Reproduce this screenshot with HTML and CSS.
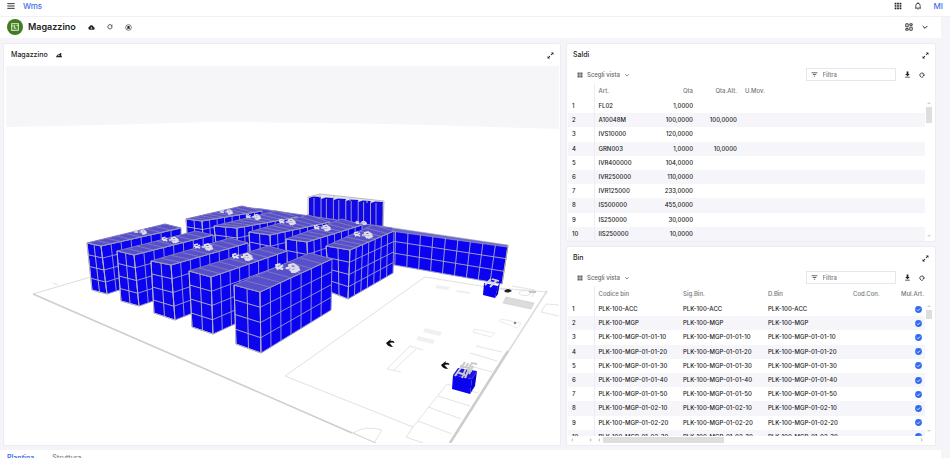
FILE: index.html
```html
<!DOCTYPE html>
<html lang="it">
<head>
<meta charset="utf-8">
<title>Wms - Magazzino</title>
<link rel="stylesheet" href="styles.css">
</head>
<body>
<svg class="defs" aria-hidden="true">
  <symbol id="expand" viewBox="0 0 12 12"><path d="M7 1h4v4L9.600 3.600 7.500 5.700 6.300 4.500 8.400 2.400zM5 11H1V7l1.400 1.400 2.100-2.100 1.200 1.200-2.100 2.100z"/></symbol>
  <symbol id="views" viewBox="0 0 12 12"><path d="M1 1h4.500v4.500H1zM6.500 1H11v4.500H6.500zM1 6.500h4.500V11H1zM6.500 6.500H11V11H6.500z"/></symbol>
  <symbol id="chevron" viewBox="0 0 12 12"><path d="M2.500 4.500 6 8l3.500-3.500" fill="none" stroke="currentColor" stroke-width="1.500"/></symbol>
  <symbol id="filter" viewBox="0 0 12 12"><path d="M1 3h10M3 6h6M5 9h2" fill="none" stroke="currentColor" stroke-width="1.500"/></symbol>
  <symbol id="download" viewBox="0 0 12 12"><path d="M4.500 1h3v4H10L6 9 2 5h2.500zM2 10h8v1.300H2z"/></symbol>
  <symbol id="reload" viewBox="0 0 12 12"><path d="M9.500 3A4.300 4.300 0 1 0 10.300 6" fill="none" stroke="currentColor" stroke-width="1.500"/><path d="M10.800 1v4H7z"/></symbol>
  <symbol id="reload-small" viewBox="0 0 12 12"><path d="M8.500 9.500A4.200 4.200 0 1 1 10 5.500" fill="none" stroke="currentColor" stroke-width="1.600"/><path d="M7 5.500h5L9.600 8.500z"/></symbol>
  <symbol id="check" viewBox="0 0 12 12"><circle cx="6" cy="6" r="5.800"/><path d="m3.300 6.200 1.900 1.900 3.600-3.800" fill="none" stroke="#fff" stroke-width="1.400"/></symbol>
</svg>

<header class="topbar">
  <button class="icon-btn" aria-label="Menu"><svg class="ic8" viewBox="0 0 12 12"><path d="M.5 2.500h11M.5 6h11M.5 9.500h11" stroke="currentColor" stroke-width="1.400"/></svg></button>
  <a class="brand" href="#">Wms</a>
  <span class="spacer"></span>
  <button class="icon-btn" aria-label="App"><svg class="ic8" viewBox="0 0 12 12"><path d="M1 1h2.600v2.600H1zM4.700 1h2.600v2.600H4.700zM8.400 1H11v2.600H8.400zM1 4.700h2.600v2.600H1zM4.700 4.700h2.600v2.600H4.700zM8.400 4.700H11v2.600H8.400zM1 8.400h2.600V11H1zM4.700 8.400h2.600V11H4.700zM8.400 8.400H11V11H8.400z"/></svg></button>
  <button class="icon-btn" aria-label="Notifiche"><svg class="ic8" viewBox="0 0 12 12"><path d="M1.500 9.200h9M2.800 9V5.200a3.200 3.200 0 0 1 6.400 0V9M6 .3v1.500" fill="none" stroke="currentColor" stroke-width="1.200"/><path d="M4.800 10.200h2.400a1.200 1.200 0 0 1-2.400 0"/></svg></button>
  <a class="user" href="#">MI</a>
</header>

<div class="page">
  <div class="titlebar">
    <svg class="badge" viewBox="0 0 16 16"><circle cx="8" cy="8" r="8" fill="#3f7d20"/><rect x="4.700" y="4.700" width="6.600" height="6.600" fill="none" stroke="#e6f0dc"/><path d="M4.700 7h2.500M9.500 6.500h2M6.500 9.200h3M7.700 6v3" stroke="#e6f0dc" stroke-width=".9"/></svg>
    <h1>Magazzino</h1>
    <button class="icon-btn" aria-label="Carica"><svg class="ic7" viewBox="0 0 12 12"><path d="M3 10a3 3 0 0 1-.4-5.800A3.700 3.700 0 0 1 9.600 5 2.600 2.600 0 0 1 9.500 10z"/><path d="M6 9V6M4.600 7.200 6 5.800l1.400 1.400" fill="none" stroke="#fff"/></svg></button>
    <button class="icon-btn" aria-label="Ricarica"><svg class="ic6" viewBox="0 0 12 12"><use href="#reload"/></svg></button>
    <button class="icon-btn" aria-label="Impostazioni"><svg class="ic7" viewBox="0 0 12 12"><circle cx="6" cy="6" r="4.900" fill="none" stroke="currentColor"/><path d="M4 3.500h4L7.500 5.500 9 8H3l1.500-2.500z"/></svg></button>
    <span class="spacer"></span>
    <button class="icon-btn" aria-label="Disposizione"><svg class="ic8" viewBox="0 0 12 12"><path d="M1.200 1.200h3.600v4.600H1.200zM7.200 1.200h3.600v2.400H7.200zM1.200 8.400h3.600v2.400H1.200zM7.200 6.200h3.600v4.600H7.200z" fill="none" stroke="currentColor" stroke-width="1.300"/></svg></button>
    <button class="icon-btn" aria-label="Espandi"><svg class="ic8" viewBox="0 0 12 12"><use href="#chevron"/></svg></button>
  </div>

  <main class="board">
    <section class="card map">
      <div class="card-head">
        <h2>Magazzino</h2>
        <button class="icon-btn" aria-label="Vista"><svg class="ic6" viewBox="0 0 12 12"><path d="M0 10.500h12V9L10.500 8V2L8.500 2 7 4 3 5.500 1 8zM3 8l4-2.500v2.500z" fill-rule="evenodd"/></svg></button>
        <span class="spacer"></span>
        <button class="icon-btn" aria-label="Ingrandisci"><svg class="ic7"><use href="#expand"/></svg></button>
      </div>
      <svg class="scene" id="scene" viewBox="6 66 553 377" role="img" aria-label="Planimetria 3D">
        <path d="M6 66H559V129Q490 127 430 125Q300 122 210 122Q110 125 6 127Z" fill="#f6f6f9"/>
        <g fill="none" stroke="#dcdcdc">
          <path d="M94 276 33 294" />
          <path d="M33 294 352 433" stroke="#cfcfcf" stroke-width="1.500"/>
          <path d="M53 283 58 285" stroke-width=".8"/>
          <path d="M285 376 425 277 506 290M285 376 413 427 406 437 423 443" stroke-width=".9"/>
          <path d="M353 433 376 443M353 433Q366 425 382 430L374 443" stroke-width=".8"/>
          <path d="M497 288 548 292" stroke-width=".9"/>
          <path d="M33 294 378 444" stroke="#cfcfcf" stroke-width=".8"/>
          <path d="M547 291 508 352" stroke-width="1.500"/>
          <path d="M508 351 450 443" stroke="#cdcdcd" stroke-width="2.600"/>
          <path d="M470 353 497 361M463 364 492 372M476 346 502 352M447 384 478 393M438 396 470 406M428 407 461 419M418 421 452 434M447 384 413 427" stroke-width=".8"/>
          <path d="M387 369 410 346 423 350M387 369 401 372M394 370 416 349" stroke-width=".8" stroke="#dedede"/>
          <path d="M474 329 495 333 491 337 473 332ZM501 319 521 323 517 328 499 321Z" stroke-width=".7" stroke="#e2e2e2"/>
          <path d="M559 305 546 304 541 312 559 316M512 286 535 290 532 297" stroke-width=".8"/>
          <ellipse cx="525" cy="293" rx="6" ry="2.500" stroke-width=".8"/>
          <path d="M536 292 529 292" stroke="#999"/>
        </g>
        <path d="M506 297 534 303 531 309 503 303Z" fill="#dcdcdc" stroke="#c2c2c2" stroke-width=".5"/>
        <g fill="#f0f0f0"><path d="M425 328l17 4-2 4-17-4zM418 336l17 4-2 4-17-4zM437 285l13 2-2 3-13-2zM457 290l14 2-2 2-13-2z"/></g>
        <path d="M504 291Q508 287 512 291Q507 294 504 291Z" fill="#222"/><circle cx="515" cy="323" r="1.300" fill="#888"/>
        <g fill="#111"><path id="arrow" d="M386 343 391 339 390.500 341Q394 340 394.500 343Q392 342 389.500 343L393 347Q388 347 386 343Z"/><use href="#arrow" x="55" y="22"/></g>
      </svg>
    </section>

    <div class="side">
      <section class="card">
        <div class="card-head">
          <h2>Saldi</h2><span class="spacer"></span>
          <button class="icon-btn" aria-label="Ingrandisci Saldi"><svg class="ic7"><use href="#expand"/></svg></button>
        </div>
        <div class="tools">
          <button class="view-btn"><svg class="ic6"><use href="#views"/></svg>Scegli vista<svg class="ic6"><use href="#chevron"/></svg></button>
          <span class="spacer"></span>
          <label class="filter"><svg class="ic7"><use href="#filter"/></svg><input type="text" placeholder="Filtra" aria-label="Filtra saldi"></label>
          <button class="icon-btn" aria-label="Scarica"><svg class="ic7"><use href="#download"/></svg></button>
          <button class="icon-btn" aria-label="Aggiorna"><svg class="ic6"><use href="#reload-small"/></svg></button>
        </div>
        <div class="grid">
          <div class="viewport">
            <table class="saldi">
              <colgroup><col class="c-idx"><col class="c-art"><col class="c-qta"><col class="c-alt"><col></colgroup>
              <thead><tr><th></th><th>Art.</th><th class="num">Qta</th><th class="num">Qta.Alt.</th><th>U.Mov.</th></tr></thead>
              <tbody>
                <tr><td>1</td><td>FL02</td><td class="num">1,0000</td><td></td><td></td></tr>
                <tr><td>2</td><td>A10048M</td><td class="num">100,0000</td><td class="num">100,0000</td><td></td></tr>
                <tr><td>3</td><td>IVS10000</td><td class="num">120,0000</td><td></td><td></td></tr>
                <tr><td>4</td><td>GRN003</td><td class="num">1,0000</td><td class="num">10,0000</td><td></td></tr>
                <tr><td>5</td><td>IVR400000</td><td class="num">104,0000</td><td></td><td></td></tr>
                <tr><td>6</td><td>IVR250000</td><td class="num">110,0000</td><td></td><td></td></tr>
                <tr><td>7</td><td>IVR125000</td><td class="num">233,0000</td><td></td><td></td></tr>
                <tr><td>8</td><td>IS500000</td><td class="num">455,0000</td><td></td><td></td></tr>
                <tr><td>9</td><td>IS250000</td><td class="num">30,0000</td><td></td><td></td></tr>
                <tr><td>10</td><td>IIS250000</td><td class="num">10,0000</td><td></td><td></td></tr>
              </tbody>
            </table>
          </div>
          <div class="vbar"><i class="up"></i><i class="thumb tall"></i><i class="down"></i></div>
        </div>
      </section>

      <section class="card">
        <div class="card-head">
          <h2>Bin</h2><span class="spacer"></span>
          <button class="icon-btn" aria-label="Ingrandisci Bin"><svg class="ic7"><use href="#expand"/></svg></button>
        </div>
        <div class="tools">
          <button class="view-btn"><svg class="ic6"><use href="#views"/></svg>Scegli vista<svg class="ic6"><use href="#chevron"/></svg></button>
          <span class="spacer"></span>
          <label class="filter"><svg class="ic7"><use href="#filter"/></svg><input type="text" placeholder="Filtra" aria-label="Filtra bin"></label>
          <button class="icon-btn" aria-label="Scarica"><svg class="ic7"><use href="#download"/></svg></button>
          <button class="icon-btn" aria-label="Aggiorna"><svg class="ic6"><use href="#reload-small"/></svg></button>
        </div>
        <div class="grid">
          <div class="viewport clipped">
            <table class="bin">
              <colgroup><col class="c-idx"><col class="c-bin"><col class="c-bin"><col class="c-bin"><col><col class="c-mul"></colgroup>
              <thead><tr><th></th><th>Codice bin</th><th>Sig.Bin.</th><th>D.Bin</th><th>Cod.Con.</th><th class="mul">Mul.Art.</th></tr></thead>
              <tbody id="bins"></tbody>
            </table>
          </div>
          <div class="vbar"><i class="up"></i><i class="thumb"></i><i class="down"></i></div>
        </div>
        <div class="hbar"><span class="pin"><i class="left"></i><i class="right"></i></span><i class="left"></i><i class="hthumb"></i><span class="spacer"></span><i class="right"></i></div>
      </section>
    </div>
  </main>

  <nav class="tabs"><a class="active" href="#">Plantina</a><a href="#">Struttura</a></nav>
</div>
<script src="app.js"></script>
</body>
</html>
```
FILE: styles.css
```css
* { box-sizing: border-box; }
body {
  margin: 0;
  height: 100vh;
  overflow: hidden;
  background: #f4f4f9;
  color: #222;
  font: 500 6px/8px Inter, "Liberation Sans", sans-serif;
}
button, input { font: inherit; color: inherit; }
button { border: 0; padding: 0; background: none; }
a { text-decoration: none; color: #3d6fe8; }
h1, h2 { margin: 0; }
svg { display: block; fill: currentColor; flex: none; }
.defs { position: absolute; width: 0; height: 0; }
.ic6 { width: 6px; height: 6px; }
.ic7 { width: 7px; height: 7px; }
.ic8 { width: 8px; height: 8px; }
.spacer { flex: 1; }

.topbar {
  display: flex;
  align-items: center;
  gap: 8px;
  height: 17px;
  padding: 0 7px 4px;
  background: #fff;
  border-bottom: 1px solid #f1f1f5;
}
.topbar .icon-btn + .icon-btn { margin-left: 4px; }
.brand { font-size: 8px; }
.user { font-size: 8px; margin-left: 4px; }

.page { margin-right: 9px; }
.titlebar {
  display: flex;
  align-items: center;
  gap: 12px;
  height: 21px;
  padding: 0 12px 1px 7px;
  background: #fff;
}
.badge { width: 16px; height: 16px; }
h1 { margin-left: -7px; font-size: 9px; line-height: 12px; font-weight: 600; }
.titlebar .icon-btn:last-child { margin-left: -4px; }

.board {
  display: grid;
  grid-template-columns: 558fr 370fr;
  gap: 5px;
  padding: 5px 5px 4px 3px;
}
.side { display: flex; flex-direction: column; gap: 4px; min-width: 0; }
.card { background: #fff; border: 1px solid #ececf2; border-radius: 2px; }
.card-head { display: flex; align-items: center; gap: 8px; height: 22px; padding: 0 6px; }
h2 { font-size: 7px; line-height: 8px; font-weight: 500; }
.map { padding: 0 1px 1px 2px; }
.map .card-head { padding: 0 5px; }
.scene { width: 100%; height: auto; }

.tools { display: flex; align-items: center; gap: 8px; height: 17px; padding: 0 10px; }
.view-btn { display: flex; align-items: center; gap: 4px; color: #666; }
.filter {
  display: flex;
  align-items: center;
  gap: 5px;
  width: 26%;
  height: 13px;
  padding: 0 4px;
  border: 1px solid #e6e6ec;
  color: #555;
}
.filter input { flex: 1; min-width: 0; border: 0; padding: 0; outline: 0; background: none; }
.filter input::placeholder { color: #777; opacity: 1; }

.grid { display: flex; padding: 0 2px 0 1px; }
.viewport { flex: 1; min-width: 0; overflow: hidden; }
.clipped { height: 150px; }
table { width: 100%; height: 158px; table-layout: fixed; border-collapse: collapse; }
th, td { padding: 0 0 0 4px; text-align: left; white-space: nowrap; font-weight: 500; }
th { height: 16px; color: #777; }
td:first-child, th:first-child { border-right: 1px solid #ececf2; }
tbody tr:nth-child(even) { background: #f6f6fa; }
.num { text-align: right; padding: 0; }
.c-idx { width: 26px; }
.c-art { width: 44px; }
.c-qta { width: 55px; }
.c-alt { width: 44px; }
.saldi th:last-child { padding-left: 8px; }
.c-bin { width: 85px; }
.c-mul { width: 24px; }
th.mul { padding: 0; }
td.mul svg { width: 7px; height: 7px; margin-left: 10px; color: #2f6bf0; }

.vbar { display: flex; flex-direction: column; align-items: center; gap: 3px; width: 8px; padding: 19px 0 4px; }
.thumb { width: 6px; height: 9px; background: #dedede; }
.tall { height: 16px; }
.up, .down, .left, .right { border: 2px solid transparent; width: 0; height: 0; }
.up { border-top: 0; border-bottom-color: #d4d4d4; }
.down { border-bottom: 0; border-top-color: #d4d4d4; margin-top: auto; }
.left { border-left: 0; border-right-color: #ccc; }
.right { border-right: 0; border-left-color: #ccc; }
.hbar { display: flex; align-items: center; gap: 3px; height: 9px; padding: 0 12px 2px 1px; }
.pin { display: flex; justify-content: space-between; width: 27px; padding: 0 3px; }
.hthumb { width: 34%; height: 6px; background: #dedede; }

.tabs { display: flex; gap: 18px; height: 18px; padding: 4px 7px; background: #fff; }
.tabs a { font-size: 7px; color: #888; }
.tabs .active { color: #3d6fe8; font-weight: 600; }
```
FILE: app.js
```js
const codes = ['ACC', 'MGP', 'MGP-01-01-10', 'MGP-01-01-20', 'MGP-01-01-30', 'MGP-01-01-40',
  'MGP-01-01-50', 'MGP-01-02-10', 'MGP-01-02-20', 'MGP-01-02-30'];
document.getElementById('bins').innerHTML = codes.map((c, i) => {
  const cell = `<td>PLK-100-${c}</td>`;
  return `<tr><td>${i + 1}</td>${cell.repeat(3)}<td></td><td class="mul"><svg><use href="#check"/></svg></td></tr>`;
}).join('');

const scene = document.getElementById('scene');
const mix = (p, q, t) => [p[0] + (q[0] - p[0]) * t, p[1] + (q[1] - p[1]) * t];

// A quad a-b-c-d split into cols (along a-b) by rows (along a-d).
function face(a, b, c, d, cols, rows, fill, line) {
  let grid = '';
  for (let i = 0; i <= cols; i++) grid += `M${mix(a, b, i / cols)}L${mix(d, c, i / cols)}`;
  for (let j = 0; j <= rows; j++) grid += `M${mix(a, d, j / rows)}L${mix(b, c, j / rows)}`;
  return `<path d="M${a}L${b}L${c}L${d}Z" fill="${fill}"/><path d="${grid}" fill="none" stroke="${line}" stroke-width="1"/>`;
}

function rack(a, b, c, d, a2, b2, c2, cols) {
  return face(a, b, b2, a2, 2, 4, '#0c05ee', '#a9a9c4') +
    face(b, c, c2, b2, cols, 4, '#0a02f0', '#8f8fcc') +
    face(a, b, c, d, 1, cols, '#574fcb', '#7d78bc') +
    `<path d="M${a}L${b}L${c}" fill="none" stroke="#9c9cba"/><path d="M${a}L${a2}L${b2}L${b}" fill="none" stroke="#b4b4bc"/>`;
}

function label(x, y, s) {
  return `<path transform="translate(${x} ${y}) scale(${s})" fill="none" stroke="#dedee8" stroke-width="1.700"
    d="M-9-2 -5-3M-8 1-3-2M-9-1-3 1M-1 0 2 0M1-2 5-3 8-1 4 0 1-2M2 1 6 3 10 1M3 3 9 0"/>`;
}

let out = '';
// Tall rack at the back
out += '<path d="M308 197 320 194 384 201 383 229 308 222Z" fill="#e4e4ea"/>';
for (let i = 0; i < 6; i++) {
  const x = 309 + i * 12.4, y = 198 + i;
  out += `<path d="M${x} ${y}l4-1.500 8 .5v27l-12-1z" fill="#1208e6"/><path d="M${x + 5} ${y}v27M${x + 12} ${y}v27" stroke="#a8a8cc" stroke-width=".9"/>`;
}
out += '<path d="M308 197 320 194 384 201 383 227M308 197V220M320 194V198M334 195V199M350 197V201M367 199V203" fill="none" stroke="#bdbdb8"/>';
// Long wall rack
out += face([383, 228], [508, 246], [502, 284], [383, 263], 10, 3, '#0a02f0', '#9c9cc8');
out += '<path d="M374 226 380 226 508 245 507 247 383 230Z" fill="#6e68c8" stroke="#aaaabc" stroke-width=".6"/><path d="M508 245 502 284" stroke="#a8a89c"/>';
// Walkway joining the rear ends of the racks
out += '<path d="M240 207 262 209 330 219 392 228 392 236 240 214Z" fill="#4a41d4"/><path d="M240 207 262 209 330 219 392 228" fill="none" stroke="#8a86b8"/>';

out += rack([186, 219], [202, 221], [262, 211], [242, 206], [188, 250], [204, 255], [262, 240], 8);
out += rack([214, 226], [237, 228], [298, 217], [276, 211], [218, 262], [238, 268], [298, 250], 8);
out += rack([249, 232], [270, 235], [330, 222], [308, 215], [251, 272], [272, 280], [330, 260], 8);
out += rack([286, 239], [307, 242], [362, 225], [342, 219], [288, 285], [309, 292], [362, 268], 8);
out += rack([326, 246], [350, 250], [394, 231], [373, 225], [330, 292], [348, 299], [393, 273], 7);
out += rack([87, 243], [101, 246], [181, 228], [165, 224], [92, 290], [107, 294], [181, 270], 8);
out += rack([117, 251], [134, 255], [213, 235], [196, 231], [121, 301], [139, 306], [213, 280], 8);
out += rack([151, 261], [171, 265], [248, 243], [230, 238], [154, 313], [175, 320], [248, 291], 8);
out += rack([189, 271], [211, 277], [287, 251], [268, 246], [192, 327], [213, 334], [287, 300], 8);
out += rack([234, 285], [260, 292], [332, 259], [310, 253], [236, 344], [261, 353], [331, 310], 7);

[[140, 232, .7], [170, 240, .9], [203, 247, 1], [242, 257, 1.100], [287, 268, 1.300], [226, 212, .7],
  [253, 217, .8], [287, 222, .9], [322, 228, .9], [363, 235, 1], [361, 223, .6]].forEach(l => { out += label(...l); });

// Free-standing boxes
out += `<path d="M484 283 498 286 495 298 483 295Z" fill="#0a02f0"/><path d="M498 286 500 282 498 294 495 298Z" fill="#0600b8"/>
<path d="M485 285 491 279M490 287 497 280M488 282 494 283M492 279 499 281" stroke="#d8d8d8" stroke-width="1.800"/>
<path d="M453 375 472 379 470 394 452 389Z" fill="#0a02f0"/><path d="M472 379 477 371 475 386 470 394Z" fill="#0600d0"/><path d="M453 375 458 368 477 371 472 379Z" fill="#1f14e4"/>
<path d="M455 376 465 362M462 378 468 363M457 372 465 375M460 366 469 368M469 374 473 366M467 370 472 371M471 363 477 364M465 378 471 364" fill="none" stroke="#cbcbcb" stroke-width="2"/>`;
scene.insertAdjacentHTML('beforeend', out);
```
